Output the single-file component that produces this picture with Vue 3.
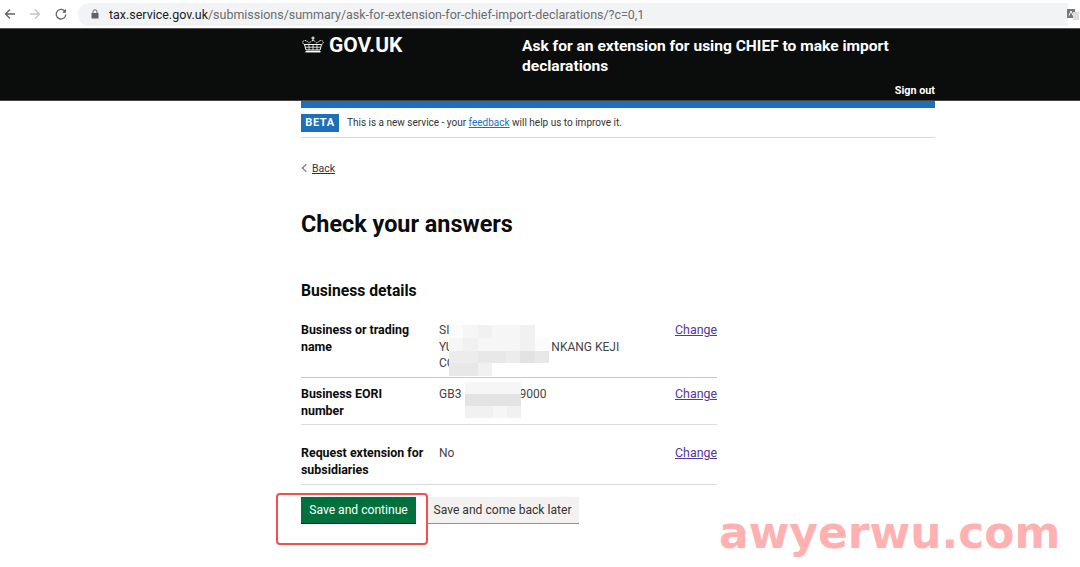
<script setup>
const rows = [
  { key: ['Business or trading', 'name'], value: ['SI', 'YU\u2003\u2003\u2003\u2003\u2003\u2003\u2003\u2003NKANG KEJI', 'CO'], cls: 'row-a' },
  { key: ['Business EORI', 'number'], value: ['GB3\u2003\u2003\u2003\u2003\u2002\u20059000'], cls: 'row-b' },
  { key: ['Request extension for', 'subsidiaries'], value: ['No'], cls: 'row-c' }
]
const mosaicA = [
  [0,1,2,1,1,2],
  [1,2,1,1,1,2,0],
  [3,3,4,4,3,5,4],
  [4,4,2]
]
const mosaicB = [
  [1,1,1,1],
  [5,5,5,5],
  [2,2,1,2]
]
const shades = ['#fbfbfb', '#f6f6f6', '#f1f1f1', '#ececec', '#e8e8e8', '#e3e3e3']
</script>

<template>
  <div class="page">
    <div class="chrome">
      <svg class="nav" width="12" height="12" viewBox="0 0 12 12"><path d="M11 6H2M6 1.500 1.500 6 6 10.500" fill="none" stroke="#5f6368" stroke-width="1.300"/></svg>
      <svg class="nav next" width="12" height="12" viewBox="0 0 12 12"><path d="M1 6h9M6 1.500 10.500 6 6 10.500" fill="none" stroke="#c0c2c5" stroke-width="1.300"/></svg>
      <svg class="nav reload" width="12" height="12" viewBox="0 0 12 12"><path d="M10.300 4A4.800 4.800 0 1 0 10.800 6.500" fill="none" stroke="#5f6368" stroke-width="1.300"/><path d="M11 .8v3.900H7.100z" fill="#5f6368"/></svg>
      <div class="url">
        <svg width="8" height="10" viewBox="0 0 8 10"><path d="M2 4V2.800a2 2 0 0 1 4 0V4" fill="none" stroke="#5f6368"/><rect x=".5" y="4" width="7" height="5.500" fill="#5f6368"/></svg>
        <span class="addr"><span class="host">tax.service.gov.uk</span>/submissions/summary/ask-for-extension-for-chief-import-declarations/?c=0,1</span>
      </div>
      <svg class="translate" width="12" height="14" viewBox="0 0 12 14"><rect x="0" y="2" width="8" height="9" fill="#777"/><rect x="6" y="5" width="6" height="8" fill="#ddd"/><path d="M2 8.500 4 4l2 4.500" fill="none" stroke="#fff"/></svg>
    </div>

    <header class="header">
      <div class="header-inner">
        <div class="brand">
          <svg width="24" height="17" viewBox="0 0 24 17" fill="none" stroke="#fff">
            <path d="M12 .5v4M10.300 2h3.400" stroke-width="1.100"/>
            <path d="M4 9C1 8 1 4.500 4 4.500c2.500 0 3 2.500 4 2.500s2-2.500 4-2.500 3 2.500 4 2.500 1.500-2.500 4-2.500c3 0 3 3.500 0 4.500" stroke-width="1" stroke-dasharray="1.400 .8"/>
            <path d="M3.500 8.500 5 14h14l1.500-5.500z" stroke-width="1"/>
            <path d="M8 8.500V14M12 8.500V14M16 8.500V14M4.500 11.200h15" stroke-width=".8"/>
            <path d="M4.500 15.700h15" stroke-width="1.500"/>
          </svg>
          <span class="logo">GOV.UK</span>
        </div>
        <div class="service">
          <div class="service-name">Ask for an extension for using CHIEF to make import declarations</div>
          <div class="signout">Sign out</div>
        </div>
      </div>
    </header>

    <main class="content">
      <div class="blue"></div>
      <div class="beta">
        <span class="tag">BETA</span>
        <span>This is a new service - your <a class="feedback">feedback</a> will help us to improve it.</span>
      </div>
      <div class="back"><span class="chev"></span><a>Back</a></div>
      <h1>Check your answers</h1>
      <h2>Business details</h2>
      <div class="list">
        <div v-for="r in rows" :key="r.cls" class="row" :class="r.cls">
          <div class="k"><div v-for="l in r.key" :key="l">{{ l }}</div></div>
          <div class="v"><div v-for="l in r.value" :key="l">{{ l }}</div></div>
          <a class="change">Change</a>
        </div>
        <div class="mosaic m-a">
          <div v-for="(line, i) in mosaicA" :key="i" class="m-line">
            <i v-for="(s, j) in line" :key="j" :style="{ background: shades[s] }"></i>
          </div>
        </div>
        <div class="mosaic m-b">
          <div v-for="(line, i) in mosaicB" :key="i" class="m-line">
            <i v-for="(s, j) in line" :key="j" :style="{ background: shades[s] }"></i>
          </div>
        </div>
      </div>
      <div class="actions">
        <button class="btn primary">Save and continue</button>
        <button class="btn secondary">Save and come back later</button>
        <div class="highlight"></div>
      </div>
    </main>
    <div class="mark">awyerwu.com</div>
  </div>
</template>

<style scoped>
.page { position: relative; width: 1080px; height: 567px; overflow: hidden; background: #fff; font-family: "Roboto", "Liberation Sans", sans-serif; color: #0b0c0c; }
.chrome { height: 27px; display: flex; align-items: center; padding-left: 4px; background: #fff; box-sizing: border-box; }
.nav { flex: none; margin-right: 13px; }
.next { margin-right: 14px; }
.reload { margin-right: 11px; }
.url { flex: none; width: 990px; height: 23px; margin-top: 1px; border-radius: 12px 0 0 12px; background: #f1f3f4; display: flex; align-items: center; gap: 10px; padding-left: 13px; box-sizing: border-box; }
.addr { font-family: "Roboto", sans-serif; font-size: 12.460px; color: #6a6d70; white-space: nowrap; }
.host { color: #202124; }
.translate { margin-left: -1px; }
.header { height: 73px; margin-top: 1px; background: #0b0c0c; border-top: 1px solid #555; border-bottom: 1px solid #444; box-sizing: border-box; color: #fff; }
.header-inner { width: 634px; margin-left: 301px; display: flex; height: 100%; }
.brand { width: 221px; display: flex; align-items: flex-start; gap: 4px; padding-top: 4px; }
.brand svg { margin-top: 3px; }
.logo { font-size: 21px; font-weight: 700; line-height: 24px; }
.service { flex: 1; position: relative; }
.service-name { width: 400px; padding-top: 7px; font-size: 15.550px; line-height: 20px; font-weight: 700; }
.signout { position: absolute; right: 0; bottom: 1px; font-size: 10.800px; line-height: 16px; font-weight: 700; }
.content { width: 634px; margin-left: 301px; }
.blue { height: 7px; background: #1d70b8; }
.beta { height: 30px; border-bottom: 1.500px solid #d8d8d8; display: flex; align-items: center; gap: 8px; box-sizing: border-box; font-size: 10px; color: #333; }
.tag { width: 38px; height: 18px; background: #1d70b8; color: #fff; font-weight: 700; font-size: 11px; letter-spacing: .6px; display: flex; align-items: center; justify-content: center; }
.feedback { color: #1d70b8; text-decoration: underline; }
.back { margin-top: 22px; height: 16px; display: flex; align-items: center; gap: 3px; font-size: 10.500px; color: #333; }
.back a { text-decoration: underline; }
.chev { width: 5px; height: 5px; margin-left: 2px; border-left: 1px solid #666; border-bottom: 1px solid #666; transform: rotate(45deg); }
h1 { margin: 31px 0 0; font-size: 23.400px; line-height: 34px; font-weight: 700; }
h2 { margin: 39px 0 0; font-size: 15.700px; line-height: 22px; font-weight: 700; }
.list { position: relative; width: 416px; margin-top: 15px; }
.row { display: flex; font-size: 12.400px; line-height: 16.500px; border-bottom: 1.500px solid #c8c8c8; box-sizing: border-box; }
.row-a { height: 61px; padding-top: 5px; }
.row-b { height: 47px; padding-top: 8px; border-bottom-color: #dcdcdc; }
.row-c { height: 60px; padding-top: 20px; border-bottom-color: #dcdcdc; }
.k { width: 138px; font-weight: 700; flex: none; }
.v { flex: 1; color: #444; white-space: pre; font-size: 12px; }
.change { color: #55389a; text-decoration: underline; }
.mosaic { position: absolute; display: flex; flex-direction: column; }
.m-line { display: flex; }
.m-line i { display: block; width: 14.300px; height: 12.800px; }
.m-a { left: 148px; top: 8px; }
.m-b { left: 164px; top: 65px; }
.m-b .m-line i { width: 13.900px; height: 12px; }
.actions { position: relative; display: flex; margin-top: 12px; align-items: flex-start; gap: 10px; }
.btn { border: 0; padding: 0; font-family: inherit; font-size: 12.100px; height: 26px; box-sizing: border-box; display: flex; align-items: center; justify-content: center; }
.primary { width: 115px; background: #00703c; color: #fff; box-shadow: 0 1px 0 #002d18; }
.secondary { width: 153px; background: #f3f2f1; color: #333; box-shadow: 0 1px 0 #929191; }
.highlight { position: absolute; left: -25px; top: -4px; width: 152px; height: 52px; border: 2.500px solid #f0504f; border-radius: 4px; box-sizing: border-box; }
.mark { position: absolute; left: 719px; top: 505px; font-family: "DejaVu Sans", sans-serif; font-weight: 700; font-size: 44px; line-height: 56px; color: #ffb1b1; white-space: nowrap; }
</style>
